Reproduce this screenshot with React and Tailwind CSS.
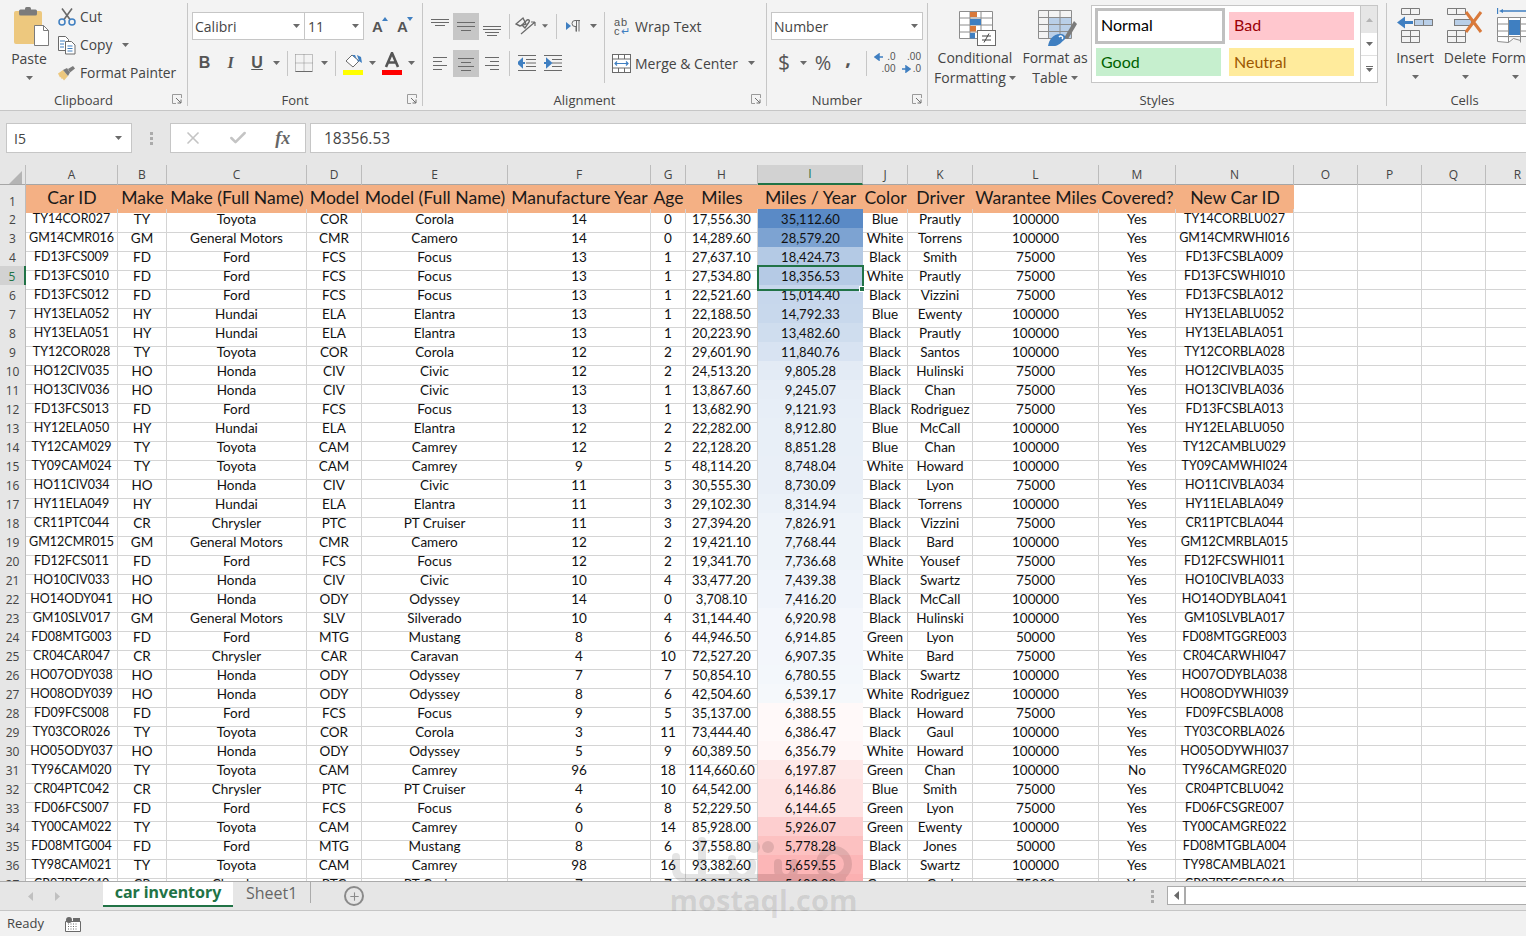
import React from 'react';
import { Check, Plus, X } from 'lucide-react';

const DATA = `TY14COR027|TY|Toyota|COR|Corola|14|0|17,556.30|35,112.60|Blue|Prautly|100000|Yes|TY14CORBLU027
GM14CMR016|GM|General Motors|CMR|Camero|14|0|14,289.60|28,579.20|White|Torrens|100000|Yes|GM14CMRWHI016
FD13FCS009|FD|Ford|FCS|Focus|13|1|27,637.10|18,424.73|Black|Smith|75000|Yes|FD13FCSBLA009
FD13FCS010|FD|Ford|FCS|Focus|13|1|27,534.80|18,356.53|White|Prautly|75000|Yes|FD13FCSWHI010
FD13FCS012|FD|Ford|FCS|Focus|13|1|22,521.60|15,014.40|Black|Vizzini|75000|Yes|FD13FCSBLA012
HY13ELA052|HY|Hundai|ELA|Elantra|13|1|22,188.50|14,792.33|Blue|Ewenty|100000|Yes|HY13ELABLU052
HY13ELA051|HY|Hundai|ELA|Elantra|13|1|20,223.90|13,482.60|Black|Prautly|100000|Yes|HY13ELABLA051
TY12COR028|TY|Toyota|COR|Corola|12|2|29,601.90|11,840.76|Black|Santos|100000|Yes|TY12CORBLA028
HO12CIV035|HO|Honda|CIV|Civic|12|2|24,513.20|9,805.28|Black|Hulinski|75000|Yes|HO12CIVBLA035
HO13CIV036|HO|Honda|CIV|Civic|13|1|13,867.60|9,245.07|Black|Chan|75000|Yes|HO13CIVBLA036
FD13FCS013|FD|Ford|FCS|Focus|13|1|13,682.90|9,121.93|Black|Rodriguez|75000|Yes|FD13FCSBLA013
HY12ELA050|HY|Hundai|ELA|Elantra|12|2|22,282.00|8,912.80|Blue|McCall|100000|Yes|HY12ELABLU050
TY12CAM029|TY|Toyota|CAM|Camrey|12|2|22,128.20|8,851.28|Blue|Chan|100000|Yes|TY12CAMBLU029
TY09CAM024|TY|Toyota|CAM|Camrey|9|5|48,114.20|8,748.04|White|Howard|100000|Yes|TY09CAMWHI024
HO11CIV034|HO|Honda|CIV|Civic|11|3|30,555.30|8,730.09|Black|Lyon|75000|Yes|HO11CIVBLA034
HY11ELA049|HY|Hundai|ELA|Elantra|11|3|29,102.30|8,314.94|Black|Torrens|100000|Yes|HY11ELABLA049
CR11PTC044|CR|Chrysler|PTC|PT Cruiser|11|3|27,394.20|7,826.91|Black|Vizzini|75000|Yes|CR11PTCBLA044
GM12CMR015|GM|General Motors|CMR|Camero|12|2|19,421.10|7,768.44|Black|Bard|100000|Yes|GM12CMRBLA015
FD12FCS011|FD|Ford|FCS|Focus|12|2|19,341.70|7,736.68|White|Yousef|75000|Yes|FD12FCSWHI011
HO10CIV033|HO|Honda|CIV|Civic|10|4|33,477.20|7,439.38|Black|Swartz|75000|Yes|HO10CIVBLA033
HO14ODY041|HO|Honda|ODY|Odyssey|14|0|3,708.10|7,416.20|Black|McCall|100000|Yes|HO14ODYBLA041
GM10SLV017|GM|General Motors|SLV|Silverado|10|4|31,144.40|6,920.98|Black|Hulinski|100000|Yes|GM10SLVBLA017
FD08MTG003|FD|Ford|MTG|Mustang|8|6|44,946.50|6,914.85|Green|Lyon|50000|Yes|FD08MTGGRE003
CR04CAR047|CR|Chrysler|CAR|Caravan|4|10|72,527.20|6,907.35|White|Bard|75000|Yes|CR04CARWHI047
HO07ODY038|HO|Honda|ODY|Odyssey|7|7|50,854.10|6,780.55|Black|Swartz|100000|Yes|HO07ODYBLA038
HO08ODY039|HO|Honda|ODY|Odyssey|8|6|42,504.60|6,539.17|White|Rodriguez|100000|Yes|HO08ODYWHI039
FD09FCS008|FD|Ford|FCS|Focus|9|5|35,137.00|6,388.55|Black|Howard|75000|Yes|FD09FCSBLA008
TY03COR026|TY|Toyota|COR|Corola|3|11|73,444.40|6,386.47|Black|Gaul|100000|Yes|TY03CORBLA026
HO05ODY037|HO|Honda|ODY|Odyssey|5|9|60,389.50|6,356.79|White|Howard|100000|Yes|HO05ODYWHI037
TY96CAM020|TY|Toyota|CAM|Camrey|96|18|114,660.60|6,197.87|Green|Chan|100000|No|TY96CAMGRE020
CR04PTC042|CR|Chrysler|PTC|PT Cruiser|4|10|64,542.00|6,146.86|Blue|Smith|75000|Yes|CR04PTCBLU042
FD06FCS007|FD|Ford|FCS|Focus|6|8|52,229.50|6,144.65|Green|Lyon|75000|Yes|FD06FCSGRE007
TY00CAM022|TY|Toyota|CAM|Camrey|0|14|85,928.00|5,926.07|Green|Ewenty|100000|Yes|TY00CAMGRE022
FD08MTG004|FD|Ford|MTG|Mustang|8|6|37,558.80|5,778.28|Black|Jones|50000|Yes|FD08MTGBLA004
TY98CAM021|TY|Toyota|CAM|Camrey|98|16|93,382.60|5,659.55|Black|Swartz|100000|Yes|TY98CAMBLA021
CR07PTC040|CR|Chrysler|PTC|PT Cruiser|7|7|40,074.80|5,600.98|Green|Gaul|75000|Yes|CR07PTCGRE040`
    .split('\n')
    .map(line => line.split('|'));

const HEADERS = ['Car ID', 'Make', 'Make (Full Name)', 'Model', 'Model (Full Name)', 'Manufacture Year', 'Age', 'Miles', 'Miles / Year', 'Color', 'Driver', 'Warantee Miles', 'Covered?', 'New Car ID'];
const COLUMNS = ['A', 'B', 'C', 'D', 'E', 'F', 'G', 'H', 'I', 'J', 'K', 'L', 'M', 'N', 'O', 'P', 'Q', 'R'];
const GRID = 'grid grid-cols-[26px_92px_49px_140px_55px_146px_143px_35px_72px_105px_45px_65px_126px_77px_118px_64px_64px_64px_64px] w-[1550px]';

// three colour scale of the Miles / Year column
const scaleColor = (text) => {
    const value = Number(text.replace(/,/g, ''));
    const mid = 6450;
    if (value >= mid) {
        const t = 0.06 + 0.94 * ((value - mid) / (35112.6 - mid));
        return `rgb(${255 - 165 * t}, ${255 - 117 * t}, ${255 - 57 * t})`;
    }
    const t = (mid - value) / 1614;
    return `rgb(${255 - 7 * t}, ${255 - 150 * t}, ${255 - 148 * t})`;
};

// Lato's capitals and digits run wider than the sheet font
const cellSize = (c) => {
    if (c === 0 || c === 13) return 'text-[12.5px] pb-[2px]';
    if (c === 7) return 'text-[13px] pb-[2px]';
    return 'text-[13.5px] pb-[3px]';
};

const Caret = ({ className = '' }) => (
    <svg width="7" height="4" viewBox="0 0 7 4" className={className}>
        <path d="M0 0h7L3.5 4z" fill="#6a6a6a" />
    </svg>
);

const Launcher = () => (
    <svg width="10" height="10" viewBox="0 0 10 10" className="absolute right-[5px] bottom-[2px]" fill="none">
        <path d="M9.5 4V.5H.5v9H4" stroke="#9a9a9a" />
        <path d="M4 4l5 5M9 5.5V9H5.5" stroke="#6f6f6f" />
    </svg>
);

const Sep = ({ className = '' }) => <div className={`w-px h-[25px] bg-[#c6c6c6] ${className}`} />;

const Group = ({ width, label, launcher, children }) => (
    <div className={`relative mt-[3px] h-[103px] flex flex-col shrink-0 border-r border-[#c6c6c6] ${width}`}>
        <div className="flex-1 min-h-0">{children}</div>
        <div className={`h-[16px] -mb-[2px] text-center text-[13px] leading-[16px] text-[#444] ${launcher ? 'pr-[20px]' : ''}`}>{label}</div>
        {launcher && <Launcher />}
    </div>
);

const Slot = ({ width, active, children }) => (
    <div className={`flex items-center justify-center shrink-0 ${width} ${active ? 'h-[27px] self-end bg-[#c6c6c6]' : 'h-[28px]'}`}>
        {children}
    </div>
);

const Lines = ({ rows, width = 20 }) => (
    <svg width={width} height="20" viewBox={`0 0 ${width} 20`}>
        {rows.map(([x1, x2, y]) => (
            <path key={`${y}-${x1}`} d={`M${x1} ${y + 0.5}H${x2}`} stroke="#6a6a6a" />
        ))}
    </svg>
);

const PasteIcon = () => (
    <svg width="36" height="40" viewBox="0 0 36 40">
        <rect x="0" y="4" width="28" height="33" rx="2" fill="#edc87e" />
        <rect x="5" y="2.5" width="18" height="6" rx="1.5" fill="#7b7b7b" />
        <rect x="11" y="0" width="6" height="5" rx="1.5" fill="#7b7b7b" />
        <path d="M20.5 18.5h9l5 5v15h-14z" fill="#fff" stroke="#7b7b7b" />
        <path d="M29.5 18.5v5h5" fill="none" stroke="#7b7b7b" />
    </svg>
);

const CutIcon = () => (
    <svg width="18" height="18" viewBox="0 0 18 18" fill="none">
        <path d="M4 .5l8 11M14 .5l-8 11" stroke="#6a6a6a" strokeWidth="1.6" />
        <circle cx="4" cy="14" r="3" stroke="#3f7fc1" strokeWidth="1.5" />
        <circle cx="14" cy="14" r="3" stroke="#3f7fc1" strokeWidth="1.5" />
    </svg>
);

const CopyIcon = () => (
    <svg width="18" height="19" viewBox="0 0 18 19" fill="none">
        <path d="M.5.5h7l3 3v11h-10z" fill="#fff" stroke="#6a6a6a" />
        <path d="M7.5 5.5h6l3.5 3.5v9h-9.5z" fill="#fff" stroke="#6a6a6a" />
        <path d="M2 5h5M2 8h4M2 11h4M9.500 10h5M9.500 12.500h5M9.500 15h5" stroke="#3f7fc1" />
    </svg>
);

const PainterIcon = () => (
    <svg width="18" height="16" viewBox="0 0 18 16" fill="none">
        <path d="M0 8.500l5-3.500 5 6-4 4.500-1.500-2-1 .5L3 12l-1 .5z" fill="#edc87e" />
        <path d="M5 5l4-2 3 4.500-2 3.500z" fill="#7b7b7b" />
        <path d="M10 4l5-3 2 2.500-5 4z" fill="#7b7b7b" />
    </svg>
);

const FontSizeIcon = ({ up }) => (
    <span className="relative text-[15px] leading-none text-[#555] font-bold font-['Liberation_Sans',sans-serif]">
        A
        <svg width="6" height="4" viewBox="0 0 6 4" className="absolute -top-[2px] -right-[5px]">
            <path d={up ? 'M0 4h6L3 0z' : 'M0 0h6L3 4z'} fill="#3f7fc1" />
        </svg>
    </span>
);

const BorderIcon = () => (
    <svg width="18" height="18" viewBox="0 0 18 18" fill="none">
        <path d="M.5.5h17v17M.5.5v17h17M9 .5v17M.5 9h17" stroke="#8a8a8a" strokeDasharray="1 1" />
        <path d="M.5 17.500h17" stroke="#6a6a6a" />
    </svg>
);

const FillIcon = () => (
    <svg width="20" height="23" viewBox="0 0 20 23" fill="none">
        <path d="M3 9l6-6 7 6-6 6z" fill="#fff" stroke="#6a6a6a" />
        <path d="M9 3l7 6-1 1-3-7z" fill="#3f7fc1" />
        <path d="M14 3l4 2 1 6-3-2z" fill="#3f7fc1" />
        <rect y="18" width="20" height="5" fill="#ffff00" />
    </svg>
);

const ColorAIcon = () => (
    <svg width="20" height="23" viewBox="0 0 20 23" fill="none">
        <path d="M4 15L10 1l6 14M6 10.500h8" stroke="#555" strokeWidth="2.600" />
        <rect y="18" width="20" height="5" fill="#ff0000" />
    </svg>
);

const OrientationIcon = () => (
    <svg width="22" height="20" viewBox="0 0 22 20" fill="none">
        <path d="M5 10L1 8l7-6 3 6z" stroke="#6a6a6a" strokeWidth="1.400" />
        <path d="M10 12l-3-3 5-5c2-1 3 1 2 2z" stroke="#6a6a6a" strokeWidth="1.400" />
        <path d="M6 18L20 6M20 6h-4M20 6v4" stroke="#6a6a6a" strokeWidth="1.200" />
    </svg>
);

const RtlIcon = () => (
    <svg width="15" height="12" viewBox="0 0 15 12">
        <path d="M0 2l5 4-5 4z" fill="#3f7fc1" />
        <path d="M14 .5H9a3 3 0 0 0 0 6h1V11.500M10.500 .5v11M13 .5v11" fill="none" stroke="#6a6a6a" />
    </svg>
);

const IndentIcon = ({ right }) => (
    <svg width="18" height="16" viewBox="0 0 18 16" fill="none">
        <path d="M0 .5h18M8 4.500h10M8 8h10M8 11.500h10M0 15.500h18" stroke="#6a6a6a" />
        {right
            ? <path d="M0 8h5M3 4.500L7 8l-4 3.500z" stroke="#3f7fc1" strokeWidth="2" fill="#3f7fc1" />
            : <path d="M7 8H3M4 4.500L0 8l4 3.500z" stroke="#3f7fc1" strokeWidth="2" fill="#3f7fc1" />}
    </svg>
);

const MergeIcon = () => (
    <svg width="19" height="19" viewBox="0 0 19 19" fill="none">
        <rect x=".5" y=".5" width="18" height="18" stroke="#6a6a6a" fill="#fff" />
        <path d="M.5 5h18M.5 14h18M6.500 .5V5M12.500 .5V5M6.500 14v4.500M12.500 14v4.500" stroke="#6a6a6a" />
        <path d="M3 9.500h13M5 7.500l-2 2 2 2M14 7.500l2 2-2 2" stroke="#3f7fc1" strokeWidth="1.200" />
    </svg>
);

const DecimalIcon = ({ more }) => (
    <span className="relative block w-[23px] h-[22px] text-[10px] leading-[10px] text-[#555] font-['Liberation_Sans',sans-serif]">
        <span className="absolute right-0 top-0">{more ? '.00' : '.0'}</span>
        <span className="absolute right-0 bottom-0">{more ? '.0' : '.00'}</span>
        <svg width="9" height="8" viewBox="0 0 9 8" className={`absolute left-[1px] ${more ? 'bottom-[1px]' : 'top-[1px]'}`}>
            <path d={more ? 'M0 4h6M4 1l4 3-4 3z' : 'M9 4H3M5 1L1 4l4 3z'} stroke="#3f7fc1" strokeWidth="1.500" fill="#3f7fc1" />
        </svg>
    </span>
);

const ConditionalIcon = () => (
    <svg width="38" height="36" viewBox="0 0 38 36" fill="none" className="ml-[6px]">
        <path d="M.5 1.500h33v27H.5zM.5 8h33M.5 15h33M.5 22h33M11 1.500v27M22 1.500v27" stroke="#8c8c8c" fill="#fff" />
        <rect x="11" y="2" width="7" height="5" fill="#d9793a" />
        <rect x="11" y="9" width="11" height="6" fill="#3f7fc1" />
        <rect x="11" y="16" width="6" height="5.500" fill="#d9793a" />
        <rect x="11" y="23" width="5" height="5.500" fill="#3f7fc1" />
        <rect x="18.500" y="20.500" width="18" height="15" fill="#fff" stroke="#6a6a6a" />
        <path d="M23 26h9M23 30h9M30 23.500l-5 9" stroke="#444" />
    </svg>
);

const TableIcon = () => (
    <svg width="40" height="36" viewBox="0 0 40 36" fill="none" className="ml-[6px]">
        <rect x="10" y="8" width="23" height="20" fill="#b9cfe8" />
        <path d="M.5.500h33v28H.5zM.5 7.500h33M.5 14.500h33M.5 21.500h33M10.500 .5v28M22 .5v28" stroke="#8c8c8c" />
        <path d="M26 28L36 11l3 3-9 15z" fill="#7b7b7b" />
        <path d="M10 36c1-6 5-12 12-12 4 0 6 2 5 5-3 3-7 7-10 7z" fill="#3f7fc1" />
        <path d="M21 27c2-2 5 0 3 2" stroke="#fff" strokeWidth="1.500" />
    </svg>
);

const InsertIcon = () => (
    <svg width="36" height="36" viewBox="0 0 36 36" fill="none">
        <path d="M4.500 .5h18v6h-18zM13.500 .5v6M4.500 22.500h18v12h-18zM4.500 28.500h18M13.500 22.500v12" stroke="#7b7b7b" />
        <rect x="17.500" y="11.500" width="18" height="6" stroke="#7b7b7b" fill="#b9cfe8" />
        <path d="M26.500 11.500v6" stroke="#7b7b7b" />
        <path d="M5 14.500h11" stroke="#3f7fc1" strokeWidth="3" />
        <path d="M0 14.500L8 8.500v12z" fill="#3f7fc1" />
    </svg>
);

const DeleteIcon = () => (
    <svg width="36" height="36" viewBox="0 0 36 36" fill="none">
        <path d="M.5 .5h18v6H.5zM9.500 .5v6M.5 22.500h18v12H.5zM.5 28.500h18M9.500 22.500v12" stroke="#7b7b7b" />
        <rect x="7.500" y="11.500" width="17" height="6" stroke="#7b7b7b" fill="#b9cfe8" />
        <path d="M19 4l15 20M34 4L19 24" stroke="#d9793a" strokeWidth="3" />
    </svg>
);

const FormatIcon = () => (
    <svg width="36" height="36" viewBox="0 0 36 36" fill="none">
        <path d="M.5 0v6M35.500 0v6M4 3h28" stroke="#3f7fc1" strokeWidth="1.300" />
        <path d="M2 3l4-2v4zM34 3l-4-2v4z" fill="#3f7fc1" />
        <path d="M.5 9.500h35v19H.5zM.5 16h35M.5 23h35M11.500 9.500v25M23.500 9.500v25M.5 28.500v5l11 1 5-4 7 2" stroke="#8c8c8c" fill="#fff" />
        <rect x="12" y="12" width="11" height="15" fill="#3f7fc1" />
    </svg>
);

const BigButton = ({ width, icon, lines, children }) => (
    <div className={`flex flex-col items-center pt-[7px] shrink-0 ${width}`}>
        <div className="h-[36px] flex items-center justify-center">{icon}</div>
        <div className="mt-[2px] text-center text-[14px] leading-[20px] text-[#444] whitespace-nowrap">
            {lines.map(line => <div key={line}>{line}</div>)}
            {children}
        </div>
    </div>
);

const StyleCell = ({ className, children }) => (
    <div className={`flex items-center text-[16px] font-['Lato',sans-serif] ${className}`}>{children}</div>
);

const Ribbon = () => (
    <div className="flex h-[111px] shrink-0 bg-[#f3f3f3] border-b border-[#c6c6c6] overflow-hidden">
        <Group width="w-[188px]" label="Clipboard" launcher>
            <div className="flex">
                <div className="w-[58px] flex flex-col items-center">
                    <div className="pt-[4px] pl-[6px] h-[45px]"><PasteIcon /></div>
                    <div className="mt-[1px] text-[14px] leading-[20px] text-[#444]">Paste</div>
                    <Caret className="mt-[7px]" />
                </div>
                <div className="flex flex-col text-[13.8px] text-[#444] leading-[28px]">
                    <div className="flex items-center h-[28px]"><span className="w-[22px]"><CutIcon /></span>Cut</div>
                    <div className="flex items-center h-[28px]"><span className="w-[22px]"><CopyIcon /></span>Copy<Caret className="ml-[10px]" /></div>
                    <div className="flex items-center h-[28px]"><span className="w-[22px]"><PainterIcon /></span>Format Painter</div>
                </div>
            </div>
        </Group>

        <Group width="w-[235px]" label="Font" launcher>
            <div className="pt-[9px] pl-[4px]">
                <div className="flex h-[28px]">
                    <div className="flex items-center justify-between w-[113px] px-[2px] pr-[4px] bg-white border border-[#c6c6c6] text-[14px] text-[#444]">Calibri<Caret /></div>
                    <div className="flex items-center justify-between w-[60px] px-[3px] pr-[4px] -ml-px bg-white border border-[#c6c6c6] text-[14px] text-[#444]">11<Caret /></div>
                    <div className="flex items-center justify-center w-[27px]"><FontSizeIcon up /></div>
                    <div className="flex items-center justify-center w-[23px]"><FontSizeIcon /></div>
                </div>
                <div className="flex items-center h-[28px] mt-[9px]">
                    <Slot width="w-[25px]"><span className="text-[16px] font-bold text-[#555] font-['Liberation_Sans',sans-serif]">B</span></Slot>
                    <Slot width="w-[27px]"><span className="text-[16px] italic font-bold text-[#555] font-['Liberation_Serif',serif]">I</span></Slot>
                    <Slot width="w-[26px]"><span className="text-[16px] font-bold underline text-[#555] font-['Liberation_Sans',sans-serif]">U</span></Slot>
                    <Slot width="w-[12px]"><Caret /></Slot>
                    <Sep className="ml-[5px]" />
                    <Slot width="w-[32px]"><BorderIcon /></Slot>
                    <Slot width="w-[8px]"><Caret /></Slot>
                    <Sep className="ml-[7px]" />
                    <Slot width="w-[33px]"><FillIcon /></Slot>
                    <Slot width="w-[7px]"><Caret /></Slot>
                    <Slot width="w-[32px]"><ColorAIcon /></Slot>
                    <Slot width="w-[7px]"><Caret /></Slot>
                </div>
            </div>
        </Group>

        <Group width="w-[344px]" label="Alignment" launcher>
            <div className="flex pt-[9px] pl-[4px]">
                <div className="w-[177px] shrink-0">
                    <div className="flex items-center h-[28px]">
                        <Slot width="w-[26px]"><Lines rows={[[1, 19, 3], [1, 19, 6], [5, 15, 9]]} /></Slot>
                        <Slot width="w-[26px]" active><Lines rows={[[1, 19, 5], [1, 19, 9], [5, 15, 13]]} /></Slot>
                        <Slot width="w-[26px]"><Lines rows={[[1, 19, 10], [1, 19, 13], [3, 17, 16], [5, 15, 19]]} /></Slot>
                        <Sep className="ml-[4px]" />
                        <Slot width="w-[32px]"><OrientationIcon /></Slot>
                        <Slot width="w-[6px]"><Caret /></Slot>
                        <Sep className="ml-[8px]" />
                        <Slot width="w-[32px]"><RtlIcon /></Slot>
                        <Slot width="w-[8px]"><Caret /></Slot>
                    </div>
                    <div className="flex items-center h-[28px] mt-[9px]">
                        <Slot width="w-[26px]"><Lines rows={[[3, 17, 4], [3, 12, 8], [3, 17, 12], [3, 12, 16]]} /></Slot>
                        <Slot width="w-[26px]" active><Lines rows={[[2, 18, 4], [5, 15, 8], [2, 18, 12], [5, 15, 16]]} /></Slot>
                        <Slot width="w-[26px]"><Lines rows={[[3, 17, 4], [8, 17, 8], [3, 17, 12], [8, 17, 16]]} /></Slot>
                        <Sep className="ml-[4px]" />
                        <Slot width="w-[34px]"><IndentIcon /></Slot>
                        <Slot width="w-[18px]"><IndentIcon right /></Slot>
                    </div>
                </div>
                <div className="w-px h-[71px] bg-[#c6c6c6]" />
                <div className="pl-[7px] text-[14px] text-[#444]">
                    <div className="flex items-center h-[28px]">
                        <span className="w-[23px] pl-[2px] pt-[1px] text-[11px] leading-[9px] tracking-[1px] text-[#555] font-['Liberation_Sans',sans-serif]">ab<br />c<span className="text-[#3f7fc1]">↵</span></span>
                        Wrap Text
                    </div>
                    <div className="flex items-center h-[28px] mt-[9px]">
                        <span className="w-[23px]"><MergeIcon /></span>
                        Merge &amp; Center<Caret className="ml-[10px]" />
                    </div>
                </div>
            </div>
        </Group>

        <Group width="w-[161px]" label="Number" launcher>
            <div className="pt-[9px] pl-[4px]">
                <div className="flex items-center justify-between w-[152px] h-[28px] pl-[2px] pr-[4px] bg-white border border-[#c6c6c6] text-[14px] text-[#444]">Number<Caret /></div>
                <div className="flex items-center h-[28px] mt-[9px] text-[#555]">
                    <Slot width="w-[26px]"><span className="text-[21px]">$</span></Slot>
                    <Slot width="w-[12px]"><Caret /></Slot>
                    <Slot width="w-[28px]"><span className="text-[20px]">%</span></Slot>
                    <Slot width="w-[22px]"><span className="text-[20px] leading-none font-bold -mt-[10px]">,</span></Slot>
                    <Sep className="ml-[7px]" />
                    <Slot width="w-[34px]"><DecimalIcon /></Slot>
                    <Slot width="w-[20px]"><DecimalIcon more /></Slot>
                </div>
            </div>
        </Group>

        <Group width="w-[459px]" label="Styles">
            <div className="flex">
                <div className="ml-[2px]" />
                <BigButton width="w-[90px]" icon={<ConditionalIcon />} lines={['Conditional']}>
                    <div className="flex items-center justify-center">Formatting<Caret className="ml-[3px]" /></div>
                </BigButton>
                <BigButton width="w-[70px]" icon={<TableIcon />} lines={['Format as']}>
                    <div className="flex items-center justify-center">Table<Caret className="ml-[3px]" /></div>
                </BigButton>
                <div className="ml-px mt-[2px] flex w-[287px] h-[78px] bg-white border border-[#c6c6c6]">
                    <div className="w-[268px] pl-[3px] pt-[2px]">
                        <div className="flex items-center">
                            <StyleCell className="w-[130px] h-[36px] pl-[3px] pb-[2px] border-[3px] border-[#c0c0c0] text-black text-[16.5px]">Normal</StyleCell>
                            <StyleCell className="w-[125px] h-[28px] ml-[4px] pl-[5px] pb-[2px] bg-[#ffc7ce] text-[#9c0006]">Bad</StyleCell>
                        </div>
                        <div className="flex items-center mt-[4px]">
                            <StyleCell className="w-[125px] h-[28px] ml-px pl-[5px] bg-[#c6efce] text-[#006100]">Good</StyleCell>
                            <StyleCell className="w-[125px] h-[28px] ml-[8px] pl-[5px] bg-[#ffeb9c] text-[#9c5700]">Neutral</StyleCell>
                        </div>
                    </div>
                    <div className="flex-1 flex flex-col border-l border-[#c6c6c6]">
                        <div className="h-[27px] flex items-center justify-center bg-[#e6e6e6]"><Caret className="rotate-180 opacity-40" /></div>
                        <div className="h-[23px] flex items-center justify-center border-b border-[#e0e0e0]"><Caret /></div>
                        <div className="flex-1 flex flex-col items-center justify-center"><div className="w-[7px] h-px mb-[1px] bg-[#6a6a6a]" /><Caret /></div>
                    </div>
                </div>
            </div>
        </Group>

        <Group width="w-[156px]" label="Cells">
            <div className="flex pl-[3px] text-[14px]">
                <div className="w-[50px] flex flex-col items-center pt-[5px]">
                    <div className="h-[38px]"><InsertIcon /></div>
                    <div className="mt-[2px] leading-[20px] text-[#444]">Insert</div>
                    <Caret className="mt-[7px]" />
                </div>
                <div className="w-[50px] flex flex-col items-center pt-[5px]">
                    <div className="h-[38px]"><DeleteIcon /></div>
                    <div className="mt-[2px] leading-[20px] text-[#444]">Delete</div>
                    <Caret className="mt-[7px]" />
                </div>
                <div className="w-[50px] flex flex-col items-center pt-[5px]">
                    <div className="h-[38px]"><FormatIcon /></div>
                    <div className="mt-[2px] leading-[20px] text-[#444]">Format</div>
                    <Caret className="mt-[7px]" />
                </div>
            </div>
        </Group>
    </div>
);

const FormulaBar = () => (
    <div className="flex h-[54px] shrink-0 pt-[12px] pl-[6px] bg-[#e6e6e6]">
        <div className="flex items-center justify-between w-[126px] h-[30px] pl-[7px] pr-[9px] bg-white border border-[#c6c6c6] text-[14px] text-[#444]">I5<Caret /></div>
        <div className="w-[38px] h-[30px] flex flex-col items-center justify-center gap-[2px]">
            <div className="w-[3px] h-[3px] bg-[#ababab]" />
            <div className="w-[3px] h-[3px] bg-[#ababab]" />
            <div className="w-[3px] h-[3px] bg-[#ababab]" />
        </div>
        <div className="flex items-center w-[136px] h-[30px] bg-white border border-[#c6c6c6]">
            <span className="w-[45px] flex justify-center"><X size={20} strokeWidth={2} color="#c4c4c4" /></span>
            <span className="w-[45px] flex justify-center"><Check size={20} strokeWidth={3} color="#c4c4c4" /></span>
            <span className="w-[45px] text-center italic font-bold text-[18px] text-[#666] font-['Liberation_Serif',serif]">fx</span>
        </div>
        <div className="flex items-center flex-1 h-[30px] ml-[4px] pl-[13px] pt-[2px] bg-white border border-[#c6c6c6] border-r-0 text-[15.5px] text-[#444]">18356.53</div>
    </div>
);

const Sheet = () => (
    <div className="flex-1 min-h-0 overflow-hidden bg-white font-['Lato',sans-serif] text-[#111]">
        {/* 列ヘッダー */}
        <div className={`${GRID} h-[20px] bg-[#e6e6e6] border-b border-[#a6a6a6] font-['Open_Sans',sans-serif] text-[12px] text-[#444]`}>
            <div className="flex items-end justify-end pr-[3px] pb-[1px] border-r border-[#bcbcbc]">
                <svg width="13" height="13" viewBox="0 0 13 13"><path d="M13 0v13H0z" fill="#b4b4b4" /></svg>
            </div>
            {COLUMNS.map(col => (
                <div
                    key={col}
                    className={`flex items-center justify-center border-r border-[#bcbcbc] ${col === 'I' ? 'bg-[#d2d2d2] text-[#217346] border-b-2 border-b-[#217346]' : ''}`}
                >
                    {col}
                </div>
            ))}
        </div>

        <div className={`${GRID} h-[24px]`}>
            <div className="flex items-end justify-center pb-[1px] bg-[#e6e6e6] border-r border-b border-[#bcbcbc] text-[12px] text-[#444] font-['Open_Sans',sans-serif]">1</div>
            {HEADERS.map(text => (
                <div key={text} className="flex items-center justify-center pb-[2px] bg-[#f4b084] text-[17.6px] text-[#1a1a1a] whitespace-nowrap">{text}</div>
            ))}
            {['O', 'P', 'Q', 'R'].map(col => (
                <div key={col} className="border-r border-b border-[#d4d4d4]" />
            ))}
        </div>

        {DATA.map((row, i) => {
            const rowNo = i + 2;
            const selected = rowNo === 5;
            return (
                <div key={rowNo} className={`${GRID} h-[19px]`}>
                    <div className={`flex items-center justify-center pb-[1px] border-b border-[#bcbcbc] text-[12px] font-['Open_Sans',sans-serif] ${selected ? 'bg-[#d2d2d2] text-[#217346] border-r-2 border-r-[#217346]' : 'bg-[#e6e6e6] text-[#444] border-r border-r-[#bcbcbc]'}`}>
                        {rowNo}
                    </div>
                    {row.map((text, c) => (
                        c === 8 ? (
                            <div
                                key={c}
                                className="relative flex items-center justify-center pb-[3px] text-[13px] whitespace-nowrap"
                                style={{ backgroundColor: scaleColor(text) }}
                            >
                                {text}
                                {selected && (
                                    <div className="absolute z-10 -top-px -left-px -right-px -bottom-px border-2 border-[#217346]">
                                        <div className="absolute -right-[3px] -bottom-[3px] w-[6px] h-[6px] bg-[#217346] border border-white" />
                                    </div>
                                )}
                            </div>
                        ) : (
                            <div key={c} className={`flex items-center justify-center border-r border-b border-[#d4d4d4] whitespace-nowrap ${cellSize(c)}`}>{text}</div>
                        )
                    ))}
                    {['O', 'P', 'Q', 'R'].map(col => (
                        <div key={col} className="border-r border-b border-[#d4d4d4]" />
                    ))}
                </div>
            );
        })}
    </div>
);

const TabBar = () => (
    <div className="flex h-[30px] shrink-0 bg-[#e6e6e6] border-t border-b border-[#ababab] border-b-[#c6c6c6]">
        <div className="flex items-center w-[103px] pl-[28px] gap-[22px]">
            <svg width="5" height="9" viewBox="0 0 5 9"><path d="M5 0v9L0 4.500z" fill="#c0c0c0" /></svg>
            <svg width="5" height="9" viewBox="0 0 5 9"><path d="M0 0v9l5-4.500z" fill="#c0c0c0" /></svg>
        </div>
        <div className="flex items-center justify-center w-[130px] h-[25px] pb-[3px] bg-white border-b-[2px] border-[#217346] text-[16px] font-bold text-[#217346] font-['Noto_Sans',sans-serif]">car inventory</div>
        <div className="flex items-center h-[21px] w-[78px] pl-[13px] text-[16px] text-[#666] border-r border-[#ababab]">Sheet1</div>
        <div className="flex items-center ml-[33px] h-[28px]">
            <div className="flex items-center justify-center w-[20px] h-[20px] rounded-full border-2 border-[#8a8a8a]"><Plus size={13} strokeWidth={2} color="#8a8a8a" /></div>
        </div>
        <div className="flex-1" />
        <div className="flex flex-col items-center justify-center gap-[2px] w-[30px]">
            <div className="w-[3px] h-[3px] bg-[#ababab]" />
            <div className="w-[3px] h-[3px] bg-[#ababab]" />
            <div className="w-[3px] h-[3px] bg-[#ababab]" />
        </div>
        <div className="flex items-center w-[359px] h-[19px] mt-[4px] mr-[0px] bg-white border border-[#ababab] border-r-0">
            <div className="flex items-center justify-center w-[18px] h-full border-r-2 border-[#ababab]">
                <svg width="5" height="9" viewBox="0 0 5 9"><path d="M5 0v9L0 4.500z" fill="#6a6a6a" /></svg>
            </div>
        </div>
    </div>
);

const StatusBar = () => (
    <div className="flex items-center h-[25px] shrink-0 pl-[7px] pt-[1px] bg-[#f1f1f1] text-[13px] text-[#444]">
        Ready
        <svg width="16" height="15" viewBox="0 0 16 15" fill="none" className="ml-[21px]">
            <path d="M.5 4.500h15v10H.5z" fill="#fff" stroke="#6a6a6a" />
            <path d="M3 7h10M3 9.500h10M3 12h10" stroke="#6a6a6a" strokeDasharray="1 1.500" />
            <circle cx="4" cy="3" r="3" fill="#6a6a6a" />
            <path d="M8 1h7v3H8z" fill="#6a6a6a" />
        </svg>
    </div>
);

// mostaql logo, drawn faint over the sheet
const Watermark = () => (
    <div className="absolute left-[666px] top-[835px] w-[195px] pointer-events-none text-center">
        <svg width="195" height="50" viewBox="0 0 195 50" fill="none" opacity="0.1">
            <g stroke="#000" strokeWidth="8" strokeLinecap="round">
                <path d="M10 22v12c0 6 4 9 10 9h156" />
                <path d="M36 6v37" />
                <path d="M66 24v8c0 6 4 11 10 11s10-5 10-11v-4" />
                <path d="M112 28v6c0 6 3 9 8 9s8-3 8-9v-6" />
                <circle cx="168" cy="29" r="14" />
            </g>
            <circle cx="88" cy="12" r="6" fill="#000" />
            <circle cx="102" cy="12" r="6" fill="#000" />
        </svg>
        <div className="text-[29px] leading-[30px] font-bold text-black/10 font-['Open_Sans',sans-serif]">mostaql.com</div>
    </div>
);

const App = () => (
    <div className="relative flex flex-col w-[1526px] h-[936px] overflow-hidden bg-[#f3f3f3] font-['Open_Sans',sans-serif]">
        <Ribbon />
        <FormulaBar />
        <Sheet />
        <TabBar />
        <StatusBar />
        <Watermark />
    </div>
);

export default App;
